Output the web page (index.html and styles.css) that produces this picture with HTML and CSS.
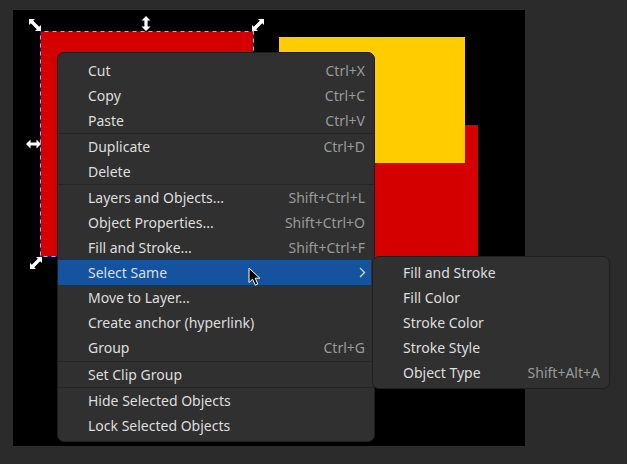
FILE: index.html
```html
<!DOCTYPE html>
<html>
<head>
<meta charset="utf-8">
<link rel="stylesheet" href="styles.css">
</head>
<body>
<div class="stage">
  <div class="canvas">
    <div class="obj red1"></div>
    <div class="obj red2"></div>
    <div class="obj yellow"></div>
    <svg class="sel" width="215" height="227" viewBox="0 0 215 227">
      <rect x="0.5" y="0.5" width="213" height="225" fill="none" stroke="#c8a8a8" stroke-width="1"/>
      <rect x="0.5" y="0.5" width="213" height="225" fill="none" stroke="#1010a0" stroke-width="1" stroke-dasharray="4 4"/>
    </svg>
    <svg class="h h-tl" width="14" height="14" viewBox="0 0 14 14"><path d="M1 1 L7 1 L5.2 2.8 L11.2 8.8 L13 7 L13 13 L7 13 L8.8 11.2 L2.8 5.2 L1 7 Z" fill="#fff"/></svg>
    <svg class="h h-t" width="10" height="15" viewBox="0 0 10 15"><path d="M5 0 L9.5 4.5 L6.6 4.5 L6.6 10.5 L9.5 10.5 L5 15 L0.5 10.5 L3.4 10.5 L3.4 4.5 L0.5 4.5 Z" fill="#fff"/></svg>
    <svg class="h h-tr" width="14" height="14" viewBox="0 0 14 14"><path d="M13 1 L13 7 L11.2 5.2 L5.2 11.2 L7 13 L1 13 L1 7 L2.8 8.8 L8.8 2.8 L7 1 Z" fill="#fff"/></svg>
    <svg class="h h-l" width="15" height="10" viewBox="0 0 15 10"><path d="M0 5 L4.5 0.5 L4.5 3.4 L10.5 3.4 L10.5 0.5 L15 5 L10.5 9.5 L10.5 6.6 L4.5 6.6 L4.5 9.5 Z" fill="#fff"/></svg>
    <svg class="h h-bl" width="14" height="14" viewBox="0 0 14 14"><path d="M13 1 L13 7 L11.2 5.2 L5.2 11.2 L7 13 L1 13 L1 7 L2.8 8.8 L8.8 2.8 L7 1 Z" fill="#fff"/></svg>
  </div>

  <div class="menu main">
    <div class="item"><span class="lbl">Cut</span><span class="acc">Ctrl+X</span></div>
    <div class="item"><span class="lbl">Copy</span><span class="acc">Ctrl+C</span></div>
    <div class="item"><span class="lbl">Paste</span><span class="acc">Ctrl+V</span></div>
    <div class="sep"></div>
    <div class="item"><span class="lbl">Duplicate</span><span class="acc">Ctrl+D</span></div>
    <div class="item"><span class="lbl">Delete</span></div>
    <div class="sep"></div>
    <div class="item"><span class="lbl">Layers and Objects...</span><span class="acc">Shift+Ctrl+L</span></div>
    <div class="item"><span class="lbl">Object Properties...</span><span class="acc">Shift+Ctrl+O</span></div>
    <div class="item"><span class="lbl">Fill and Stroke...</span><span class="acc">Shift+Ctrl+F</span></div>
    <div class="item active"><span class="lbl">Select Same</span>
      <svg class="chev" width="7" height="11" viewBox="0 0 7 11"><path d="M1 1 L5.5 5.5 L1 10" fill="none" stroke="#d0d8e8" stroke-width="1.3"/></svg>
    </div>
    <div class="item"><span class="lbl">Move to Layer...</span></div>
    <div class="item"><span class="lbl">Create anchor (hyperlink)</span></div>
    <div class="item"><span class="lbl">Group</span><span class="acc">Ctrl+G</span></div>
    <div class="sep wide"></div>
    <div class="item"><span class="lbl">Set Clip Group</span></div>
    <div class="sep"></div>
    <div class="item"><span class="lbl">Hide Selected Objects</span></div>
    <div class="item"><span class="lbl">Lock Selected Objects</span></div>
  </div>

  <div class="menu sub">
    <div class="item"><span class="lbl">Fill and Stroke</span></div>
    <div class="item"><span class="lbl">Fill Color</span></div>
    <div class="item"><span class="lbl">Stroke Color</span></div>
    <div class="item"><span class="lbl">Stroke Style</span></div>
    <div class="item"><span class="lbl">Object Type</span><span class="acc">Shift+Alt+A</span></div>
  </div>

  <svg class="cursor" width="14" height="20" viewBox="0 0 14 20"><path d="M1 1 L1 15.5 L4.6 12.2 L7.3 18.2 L9.8 17 L7.2 11.2 L11.8 11.2 Z" fill="#000" stroke="#fff" stroke-width="1" stroke-linejoin="round"/></svg>
</div>
</body>
</html>
```

FILE: styles.css
```css
html, body {
  margin: 0;
  padding: 0;
  background: #2b2b2b;
}
.stage {
  position: relative;
  width: 627px;
  height: 464px;
  overflow: hidden;
  font-family: "Noto Sans", "DejaVu Sans", sans-serif;
}
.canvas {
  position: absolute;
  left: 13px;
  top: 10px;
  width: 512px;
  height: 436px;
  background: #000;
}
.obj { position: absolute; }
.red1 { left: 28px; top: 21px; width: 212px; height: 225px; background: #d40000; }
.red2 { left: 287px; top: 115px; width: 178px; height: 180px; background: #d40000; }
.yellow { left: 266px; top: 27px; width: 186px; height: 126px; background: #ffcc00; }
.sel { position: absolute; left: 27px; top: 21px; }
.h { position: absolute; }
.h-tl { left: 15px; top: 8px; }
.h-t { left: 128px; top: 6px; }
.h-tr { left: 238px; top: 8px; }
.h-l { left: 13px; top: 129px; }
.h-bl { left: 16px; top: 246px; }

.menu {
  position: absolute;
  background: #303030;
  border: 1px solid #1f1f1f;
  border-radius: 7px;
  box-sizing: border-box;
  display: flex;
  flex-direction: column;
  font-size: 14px;
}
.main {
  left: 57px;
  top: 52px;
  width: 318px;
  padding: 5px 0 3px 0;
}
.sub {
  left: 372px;
  top: 256px;
  width: 238px;
  padding: 3px 0 3px 0;
}
.item {
  height: 25px;
  display: flex;
  align-items: center;
  justify-content: space-between;
  padding: 0 9px 0 30px;
  color: #dedede;
}
.sub .item { padding-right: 9px; }
.acc { color: #9a9a9a; }
.active {
  background: #15539e;
  margin-right: 3px;
  padding-right: 9px;
}
.chev { display: block; margin-right: -4px; }
.sep {
  height: 1px;
  background: #262626;
}
.sep.wide {
  height: 1px;
  margin-top: 1px;
}
.cursor {
  position: absolute;
  left: 248px;
  top: 267px;
}
```
